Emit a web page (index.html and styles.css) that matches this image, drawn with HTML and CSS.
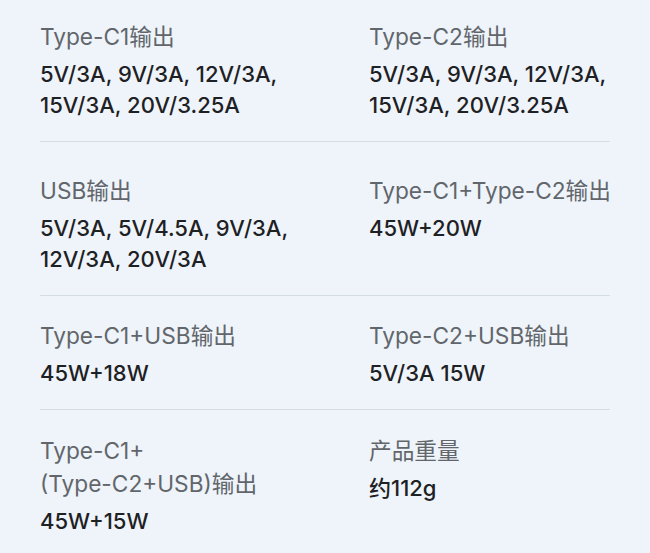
FILE: index.html
```html
<!DOCTYPE html>
<html lang="zh-CN">
<head>
<meta charset="utf-8">
<link rel="stylesheet" href="styles.css">
</head>
<body>
<div class="specs">
  <div class="row row-first">
    <div class="cell">
      <div class="label">Type-C1输出</div>
      <div class="value">5V/3A, 9V/3A, 12V/3A,<br>15V/3A, 20V/3.25A</div>
    </div>
    <div class="cell">
      <div class="label">Type-C2输出</div>
      <div class="value">5V/3A, 9V/3A, 12V/3A,<br>15V/3A, 20V/3.25A</div>
    </div>
  </div>
  <div class="row row-tall">
    <div class="cell">
      <div class="label">USB输出</div>
      <div class="value">5V/3A, 5V/4.5A, 9V/3A,<br>12V/3A, 20V/3A</div>
    </div>
    <div class="cell">
      <div class="label">Type-C1+Type-C2输出</div>
      <div class="value">45W+20W</div>
    </div>
  </div>
  <div class="row">
    <div class="cell">
      <div class="label">Type-C1+USB输出</div>
      <div class="value">45W+18W</div>
    </div>
    <div class="cell">
      <div class="label">Type-C2+USB输出</div>
      <div class="value">5V/3A 15W</div>
    </div>
  </div>
  <div class="row row-last">
    <div class="cell">
      <div class="label">Type-C1+<br>(Type-C2+USB)输出</div>
      <div class="value">45W+15W</div>
    </div>
    <div class="cell">
      <div class="label">产品重量</div>
      <div class="value">约112g</div>
    </div>
  </div>
</div>
</body>
</html>
```

FILE: styles.css
```css
html, body {
  margin: 0;
  padding: 0;
  background: #eef4fa;
}
body {
  font-family: Inter, "Noto Sans CJK SC", sans-serif;
  width: 650px;
  height: 553px;
  overflow: hidden;
}
.specs {
  padding: 0 40px;
}
.row {
  display: grid;
  grid-template-columns: 329px 1fr;
  padding: 23px 0 20px;
  border-bottom: 1px solid #d5dde5;
}
.row-first {
  padding-top: 20px;
}
.row-tall {
  padding-top: 32px;
}
.row-last {
  border-bottom: none;
  padding-top: 24px;
}
.cell {
  min-width: 0;
}
.label {
  font-size: 22.7px;
  line-height: 33px;
  color: #62666b;
  font-weight: 400;
  white-space: nowrap;
}
.value {
  margin-top: 6px;
  font-size: 22px;
  line-height: 31px;
  color: #1e2124;
  font-weight: 500;
  white-space: nowrap;
}
```
